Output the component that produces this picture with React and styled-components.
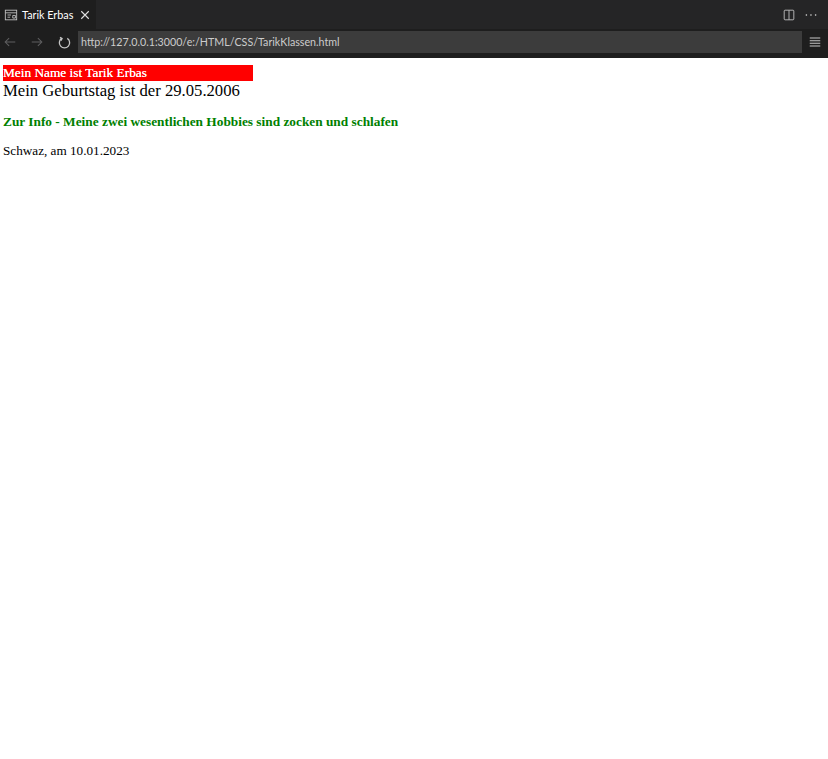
import styled, { createGlobalStyle } from 'styled-components';

const GlobalStyle = createGlobalStyle`
  html, body {
    margin: 0;
    padding: 0;
    background: #fff;
  }
`;

const Frame = styled.div`
  width: 828px;
  height: 759px;
  display: flex;
  flex-direction: column;
  overflow: hidden;
`;

const TabBar = styled.div`
  height: 29px;
  background: #252526;
  display: flex;
  justify-content: space-between;
  font-family: Lato, "Liberation Sans", sans-serif;
`;

const Tab = styled.div`
  width: 96px;
  background: #1e1e1e;
  display: flex;
  align-items: center;
  padding-left: 4px;
  box-sizing: border-box;
  color: #fff;
  font-size: 10.8px;
`;

const TabTitle = styled.span`
  width: 52px;
  margin-left: 4px;
  margin-right: 5px;
  white-space: nowrap;
`;

const TabActions = styled.div`
  display: flex;
  align-items: center;
  gap: 8px;
  padding-right: 10px;
`;

const Toolbar = styled.div`
  height: 29px;
  background: #1e1e1e;
  display: flex;
  align-items: flex-start;
  padding: 2px 0 0 3px;
  box-sizing: border-box;
`;

const NavIcon = styled.svg`
  width: ${p => p.$size || 16}px;
  height: ${p => p.$size || 16}px;
  flex: none;
  fill: none;
  stroke: ${p => p.$color || '#c5c5c5'};
  stroke-width: ${p => p.$weight || 1.2};
`;

const NavButtons = styled.div`
  display: flex;
  align-items: center;
  gap: 13px;
  width: 75px;
  height: 22px;
`;

const AddressBar = styled.div`
  width: 724px;
  height: 22px;
  background: #3c3c3c;
  color: #cccccc;
  font-family: Lato, "Liberation Sans", sans-serif;
  font-size: 10.7px;
  line-height: 22px;
  padding-left: 3px;
  box-sizing: border-box;
`;

const MenuSlot = styled.div`
  margin-left: 6px;
  height: 22px;
  display: flex;
  align-items: center;
`;

const Page = styled.main`
  flex: 1;
  background: #fff;
  padding: 7px 3px 0;
  font-family: "Liberation Serif", "Times New Roman", serif;
  color: #000;
`;

const NameBar = styled.div`
  width: 250px;
  height: 16px;
  background: #ff0000;
  color: #fff;
  font-size: 13.33px;
  line-height: 16px;
  text-shadow: 0 0 0.5px #fff;
`;

const Birthday = styled.div`
  font-size: 16.67px;
  line-height: 20px;
`;

const Hobbies = styled.p`
  margin: 13px 0 0;
  color: #008000;
  font-size: 13.33px;
  font-weight: bold;
  line-height: 16px;
`;

const Signoff = styled.p`
  margin: 13px 0 0;
  font-size: 13.2px;
  line-height: 16px;
`;

export default function App() {
  return (
    <Frame>
      <GlobalStyle />
      <TabBar>
        <Tab>
          <NavIcon viewBox="0 0 16 16" $size={14} $weight={1}>
            <rect x="1.5" y="2.5" width="13" height="11" />
            <path d="M1.5 5.5h13M4 8h4M4 10.5h3M10 8.5h3v3h-3z" />
          </NavIcon>
          <TabTitle>Tarik Erbas</TabTitle>
          <NavIcon viewBox="0 0 16 16" $size={12} $color="#e0e0e0" $weight={1.5}>
            <path d="M3 3l10 10M13 3L3 13" />
          </NavIcon>
        </Tab>
        <TabActions>
          <NavIcon viewBox="0 0 16 16" $size={14} $weight={1}>
            <rect x="2.5" y="2.5" width="11" height="11" rx="1" />
            <path d="M8 2.5v11" />
          </NavIcon>
          <NavIcon viewBox="0 0 16 16" $size={14} $weight={1.5}>
            <path d="M2 8h1.5M7.2 8h1.5M12.5 8h1.5" />
          </NavIcon>
        </TabActions>
      </TabBar>
      <Toolbar>
        <NavButtons>
          <NavIcon viewBox="0 0 16 16" $size={14} $color="#5f5f60">
            <path d="M14 8H2.5M7 3.5L2.5 8 7 12.5" />
          </NavIcon>
          <NavIcon viewBox="0 0 16 16" $size={14} $color="#5f5f60">
            <path d="M2 8h11.5M9 3.5L13.5 8 9 12.5" />
          </NavIcon>
          <NavIcon viewBox="0 0 16 16" $size={15} $weight={1.4}>
            <path d="M5 3.6A5.5 5.5 0 1 0 11 3.6M3.2 2.5L5.4 3.8 4.2 6" />
          </NavIcon>
        </NavButtons>
        <AddressBar>http://127.0.0.1:3000/e:/HTML/CSS/TarikKlassen.html</AddressBar>
        <MenuSlot>
          <NavIcon viewBox="0 0 16 16" $size={14} $color="#c5c5c5" $weight={1.2}>
            <path d="M2 3.5h12M2 6.5h12M2 9.5h12M2 12.5h12" />
          </NavIcon>
        </MenuSlot>
      </Toolbar>
      <Page>
        <NameBar>Mein Name ist Tarik Erbas</NameBar>
        <Birthday>Mein Geburtstag ist der 29.05.2006</Birthday>
        <Hobbies>Zur Info - Meine zwei wesentlichen Hobbies sind zocken und schlafen</Hobbies>
        <Signoff>Schwaz, am 10.01.2023</Signoff>
      </Page>
    </Frame>
  );
}
